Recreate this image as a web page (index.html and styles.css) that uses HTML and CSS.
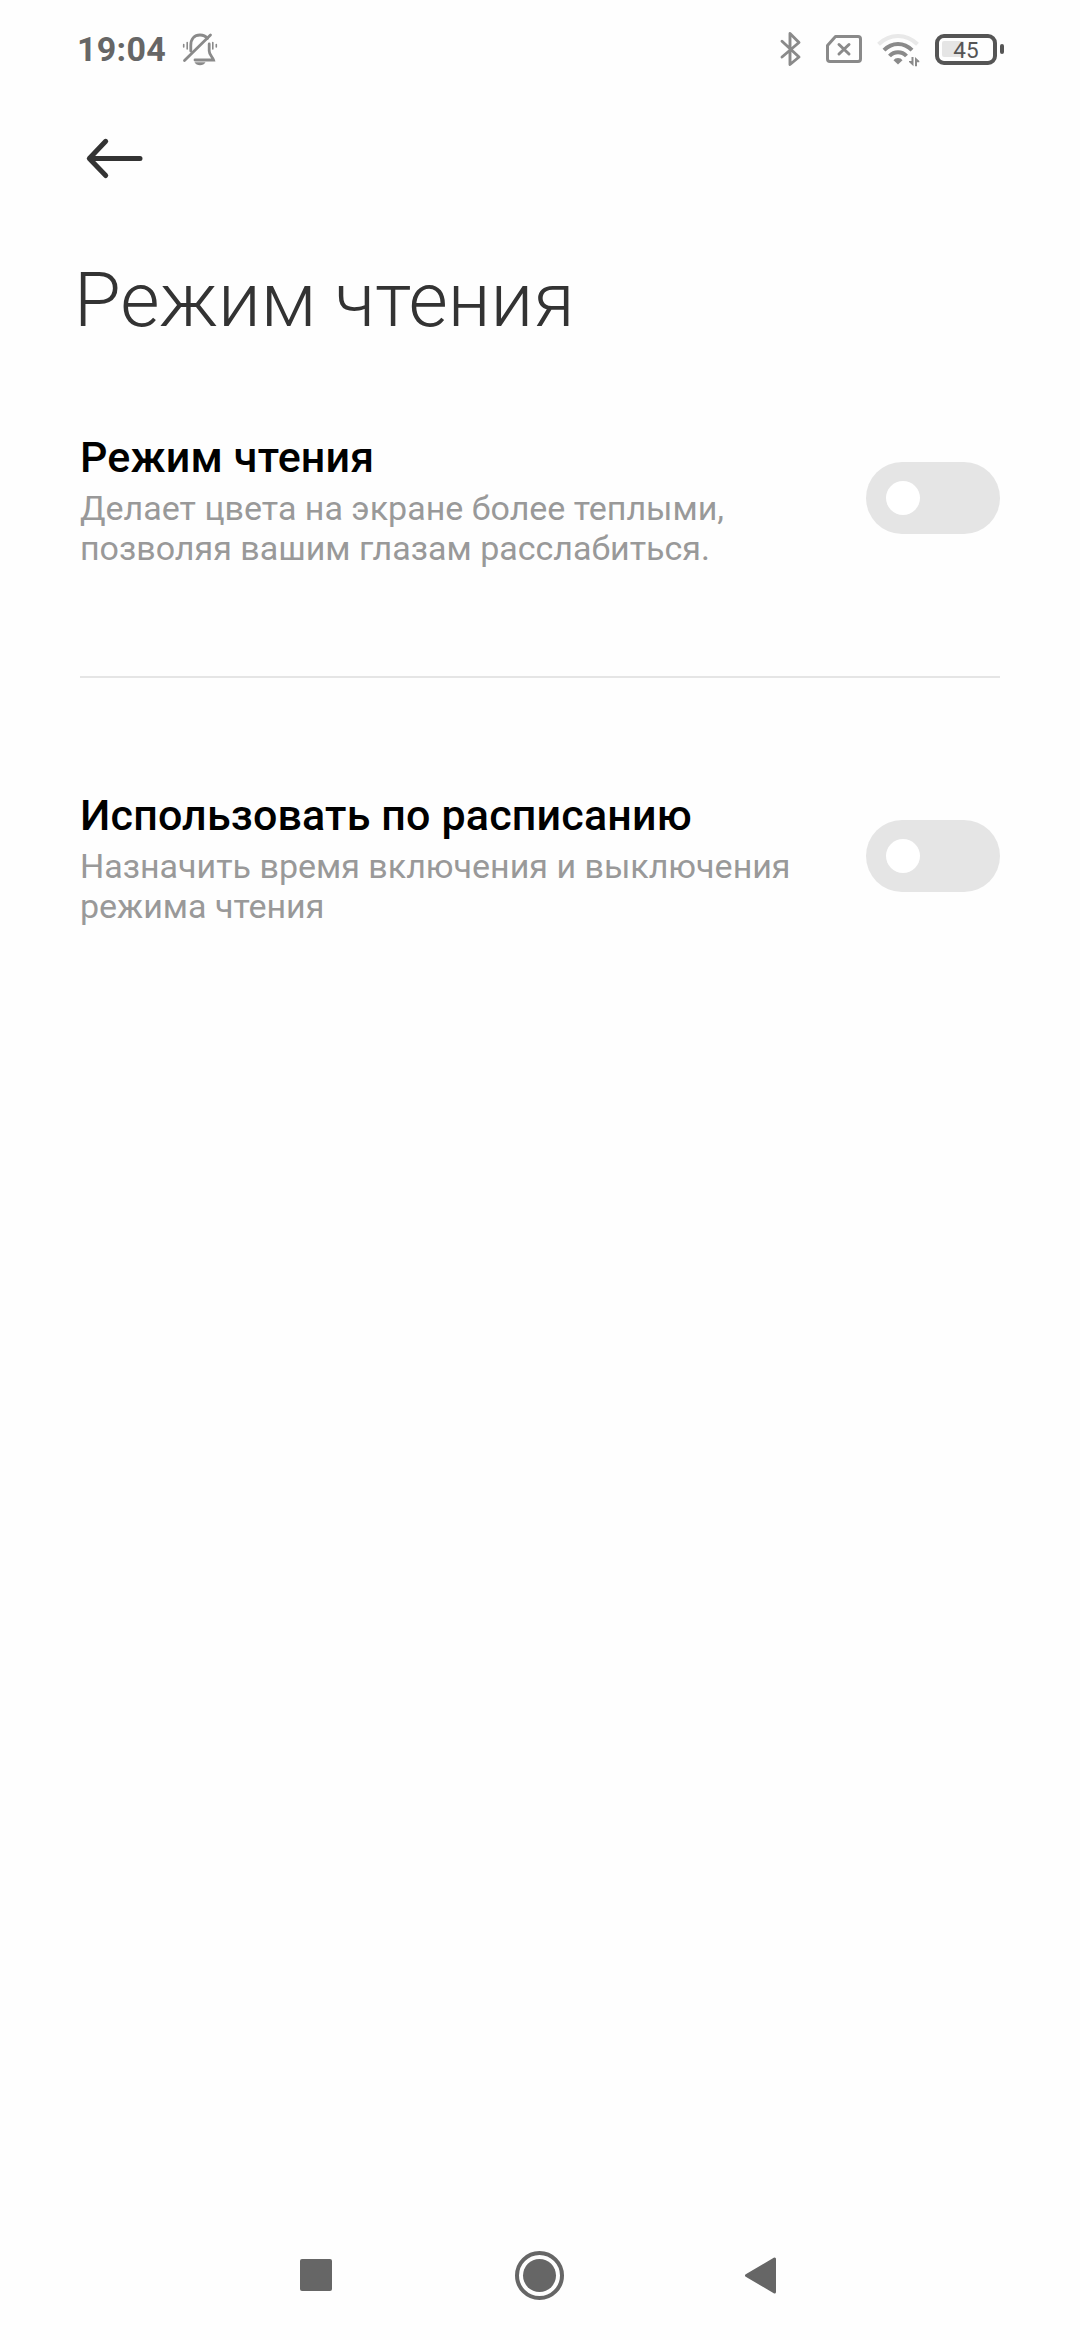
FILE: index.html
```html
<!DOCTYPE html>
<html lang="ru">
<head>
<meta charset="utf-8">
<title>Режим чтения</title>
<link rel="stylesheet" href="styles.css">
</head>
<body>
<div class="screen">
  <header class="status">
    <div class="status-left">
      <span class="clock">19:04</span>
      <svg class="bell" viewBox="180 30 40 38" width="40" height="38" fill="none" stroke="#8a8a8a" stroke-width="2.800" stroke-linecap="round">
        <path d="M190.800 51V45.500C190.800 38.500 194.500 35 200 35C203.500 35 206 36.500 207.500 38.500M209.200 44V51C209.200 54.500 212.500 57 213.500 60H195"/>
        <path d="M210.500 35L184.500 60.500"/>
        <path d="M194.500 62.300H205.500C204.500 64.300 202.500 65.300 200 65.300S195.500 64.300 194.500 62.300Z" fill="#8a8a8a" stroke="none"/>
        <path d="M187.200 42.500V49M183.700 44.500V47M212.800 42.500V49M216.300 44.500V47" stroke-width="1.600"/>
      </svg>
    </div>
    <div class="status-right">
      <svg viewBox="778 30 26 38" width="26" height="38" fill="none" stroke="#8a8a8a" stroke-width="2.900" stroke-linecap="round" stroke-linejoin="round">
        <path d="M782 41.300L799 57L790 64.500V33.500L799 42.500L782 57"/>
      </svg>
      <svg class="sim" viewBox="824 33 40 32" width="40" height="32" fill="none" stroke="#8a8a8a" stroke-width="3" stroke-linecap="round" stroke-linejoin="round">
        <path d="M835.500 36.500H858Q860.500 36.500 860.500 39V59Q860.500 61.500 858 61.500H830Q827.500 61.500 827.500 59V45.500Z"/>
        <path d="M839 44.500L849 54M849 44.500L839 54"/>
      </svg>
      <svg class="wifi" viewBox="876 30 44 38" width="44" height="38" fill="none" stroke="#8a8a8a" stroke-width="4">
        <path d="M878.500 44.300Q887 36 898 36T917.500 44.300" stroke="#e9e9e9"/>
        <path d="M884 50.200Q890 44 898 44T912 50.200"/>
        <path d="M889.500 56Q893 52.200 898 52.200T906.500 56"/>
        <path d="M898 58Q901 58 902.500 60.200L898 64.500L893.500 60.200Q895 58 898 58Z" fill="#8a8a8a" stroke="none"/>
        <path d="M911.500 57H913.500V66.300L909 62V61H911.500ZM915 66.300V57L919.300 61V62.200H917V66.300Z" fill="#8a8a8a" stroke="none"/>
      </svg>
      <div class="battery"><div class="battery-case"><span class="battery-fill"></span><span class="battery-text">45</span></div><span class="battery-tip"></span></div>
    </div>
  </header>
  <nav class="toolbar">
    <svg viewBox="84 136 62 44" width="62" height="44" fill="none" stroke="#333" stroke-width="5" stroke-linecap="round" stroke-linejoin="round">
      <path d="M89.500 158.500H140M105.700 141.300L89.300 158.500L105.700 175.500"/>
    </svg>
  </nav>
  <h1 class="title">Режим чтения</h1>
  <main class="settings">
    <section class="row">
      <div>
        <h2 class="row-title">Режим чтения</h2>
        <p class="row-text">Делает цвета на экране более теплыми,<br>позволяя вашим глазам расслабиться.</p>
      </div>
      <div class="switch"><span class="knob"></span></div>
    </section>
    <hr class="divider">
    <section class="row">
      <div>
        <h2 class="row-title">Использовать по расписанию</h2>
        <p class="row-text">Назначить время включения и выключения<br>режима чтения</p>
      </div>
      <div class="switch"><span class="knob"></span></div>
    </section>
  </main>
  <footer class="navbar">
    <svg viewBox="296 2246 482 58" width="482" height="58" fill="#666">
      <rect x="300" y="2259" width="32" height="32" rx="2"/>
      <circle cx="539.500" cy="2275.500" r="16.500"/>
      <circle cx="539.500" cy="2275.500" r="22.500" fill="none" stroke="#666" stroke-width="4"/>
      <path d="M746.500 2275.500L774.500 2259V2292Z" stroke="#666" stroke-width="3" stroke-linejoin="round"/>
    </svg>
  </footer>
</div>
</body>
</html>
```
FILE: styles.css
```css
* { box-sizing: border-box; }
body { margin: 0; background: #fefefe; font-family: Roboto, sans-serif; }
svg { display: block; flex: none; }
h1, h2, p { margin: 0; white-space: nowrap; }

.screen { display: flex; flex-direction: column; width: 1080px; height: 2340px; }

.status { display: flex; justify-content: space-between; height: 98px; padding: 0 76px 0 77px; }
.status-left, .status-right { display: flex; align-items: center; }
.clock { width: 103px; font-size: 34px; line-height: 40px; font-weight: 700; letter-spacing: 0.3px; color: #666; }
.sim { margin-left: 20px; }
.wifi { margin-left: 12px; }
.battery { display: flex; align-items: center; margin-left: 15px; }
.battery-case { display: flex; align-items: center; position: relative; width: 62px; height: 31px; border: 4px solid #555; border-radius: 9px; }
.battery-fill { width: 22px; height: 16px; margin-left: 3px; border-radius: 2px; background: #e5e5e5; }
.battery-text { position: absolute; inset: 0; text-align: center; font-size: 22.500px; line-height: 24px; font-weight: 400; color: #555; }
.battery-tip { width: 4px; height: 10px; margin-left: 3px; border-radius: 2px; background: #555; }

.toolbar { height: 157px; padding: 38px 84px 0; }
.title { padding-left: 74px; font-size: 76px; line-height: 90px; font-weight: 300; color: #333; }

.settings { flex: 1; padding: 87px 80px 0; }
.row { display: flex; justify-content: space-between; height: 136px; }
.row-title { margin-bottom: 6px; font-size: 43px; line-height: 50px; font-weight: 500; letter-spacing: 0.17px; color: #000; }
.row-text { font-size: 34px; line-height: 40px; color: #999; }
.switch { width: 134px; height: 72px; margin-top: 30px; padding: 19px 20px; border-radius: 36px; background: #e5e5e5; }
.knob { display: block; width: 34px; height: 34px; border-radius: 50%; background: #fff; }
.divider { height: 2px; margin: 108px 0 112px; border: 0; background: #e5e5e5; }

.navbar { height: 94px; padding-left: 296px; }
```
